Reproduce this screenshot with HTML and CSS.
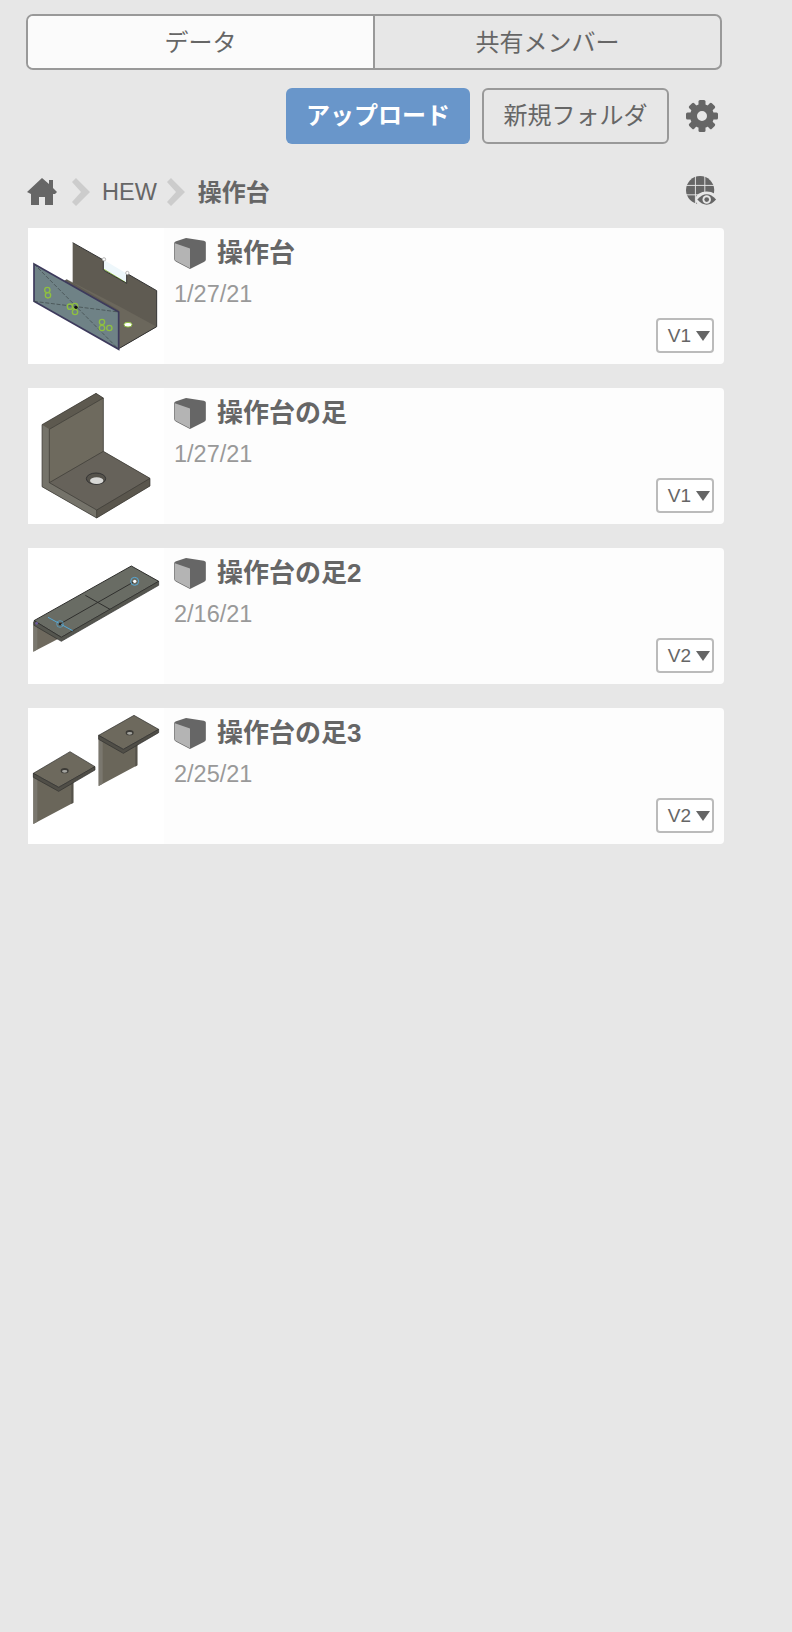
FILE: index.html
```html
<!DOCTYPE html>
<html lang="ja">
<head>
    <meta charset="UTF-8">
    <meta name="viewport" content="width=device-width, initial-scale=1.0">
    <title>データ</title>
    <link rel="stylesheet" href="styles.css">
</head>
<body>

    <svg class="defs" width="0" height="0">
        <symbol id="cube" viewBox="462 56 96 94">
            <path d="M462 72Q462 68 468 66L498 56 552 64Q558 66 558 70V122Q558 126 552 129L510 150 468 128Q462 125 462 120Z" fill="#666"/>
            <path d="M464 72 510 88V148L468 126Q464 124 464 120Z" fill="#b4b4b4"/>
        </symbol>
    </svg>

    <div class="tabs">
        <div class="tab tab-active"><span>データ</span></div>
        <div class="tab"><span>共有メンバー</span></div>
    </div>

    <div class="actions">
        <button class="btn btn-upload"><span>アップロード</span></button>
        <button class="btn btn-folder"><span>新規フォルダ</span></button>
        <svg class="gear" width="32" height="32" viewBox="-16 -16 32 32">
            <circle r="8.5" fill="none" stroke="#666" stroke-width="7"/>
            <g fill="#666">
                <rect x="-3.5" y="-16" width="7" height="6" rx="1.5"/>
                <rect x="-3.5" y="-16" width="7" height="6" rx="1.5" transform="rotate(45)"/>
                <rect x="-3.5" y="-16" width="7" height="6" rx="1.5" transform="rotate(90)"/>
                <rect x="-3.5" y="-16" width="7" height="6" rx="1.5" transform="rotate(135)"/>
                <rect x="-3.5" y="-16" width="7" height="6" rx="1.5" transform="rotate(180)"/>
                <rect x="-3.5" y="-16" width="7" height="6" rx="1.5" transform="rotate(225)"/>
                <rect x="-3.5" y="-16" width="7" height="6" rx="1.5" transform="rotate(270)"/>
                <rect x="-3.5" y="-16" width="7" height="6" rx="1.5" transform="rotate(315)"/>
            </g>
        </svg>
    </div>

    <div class="crumbs">
        <svg class="home" width="30" height="28" viewBox="0 0 30 28">
            <path d="M15 0 22 6V2H26V10L30 14 28 16H4L0 14Z" fill="#666"/>
            <path d="M4 15 15 5 26 15V27H18V19H12V27H4Z" fill="#666"/>
        </svg>
        <svg class="chev" width="19" height="28" viewBox="0 0 19 28"><path d="M0 4 4 0 18 14 4 28 0 24 9 14Z" fill="#ccc"/></svg>
        <span class="crumb">HEW</span>
        <svg class="chev" width="19" height="28" viewBox="0 0 19 28"><path d="M0 4 4 0 18 14 4 28 0 24 9 14Z" fill="#ccc"/></svg>
        <span class="crumb crumb-now">操作台</span>
        <svg class="globe" width="32" height="32" viewBox="0 0 34 34">
            <circle cx="15" cy="15" r="15" fill="#666"/>
            <path d="M0 10H30M0 20H30M10 0V30M20 0V30" stroke="#e7e7e7" stroke-width="1"/>
            <ellipse cx="22" cy="25" rx="12" ry="8.5" fill="#e7e7e7"/>
            <path d="M12 25Q22 14 32 25 22 36 12 25Z" fill="#666"/>
            <circle cx="22" cy="25" r="4.5" fill="#e7e7e7"/>
            <circle cx="22" cy="25" r="2.5" fill="#666"/>
        </svg>
    </div>

    <div class="card">
        <svg class="thumb" width="136" height="136" viewBox="24 24 408 408">
            <path d="M158 68 250 120V150L320 190V160L410 212V320L296 386 42 240 140 178 158 188Z" fill="#5f5b52"/>
            <path d="M252 120 318 160V188L252 150Z" fill="#eef7fb"/>
            <path d="M252 148 318 188" stroke="#8fc040" stroke-width="3"/>
            <path d="M140 178 296 270V386L410 320 300 260Z" fill="#6b675c"/>
            <path d="M158 68 250 120V150L320 190V160L410 212V320L298 385" fill="none" stroke="#333" stroke-width="3"/>
            <path d="M42 132 296 276V388L42 244Z" fill="#6f8286" stroke="#3d3a5c" stroke-width="5"/>
            <path d="M42 132 296 388M42 244 296 276" stroke="#3b4446" stroke-width="2" stroke-dasharray="12 5"/>
            <g fill="none" stroke="#8fc040" stroke-width="4">
                <circle cx="82" cy="210" r="8"/><circle cx="84" cy="226" r="8"/>
                <circle cx="165" cy="258" r="8"/><circle cx="165" cy="276" r="8"/><circle cx="150" cy="260" r="8"/>
                <circle cx="246" cy="306" r="8"/><circle cx="246" cy="324" r="8"/><circle cx="268" cy="324" r="8"/>
            </g>
            <ellipse cx="324" cy="314" rx="12" ry="7" fill="#fff" stroke="#8fc040" stroke-width="3"/>
            <circle cx="168" cy="262" r="5" fill="#111"/>
            <circle cx="252" cy="118" r="5" fill="#fff" stroke="#999" stroke-width="2"/>
            <circle cx="322" cy="159" r="5" fill="#fff" stroke="#999" stroke-width="2"/>
        </svg>
        <div class="info">
            <div class="title"><svg class="cube" width="32" height="31"><use href="#cube"/></svg>操作台</div>
            <div class="date">1/27/21</div>
        </div>
        <div class="ver">V1<span class="arrow"></span></div>
    </div>

    <div class="card">
        <svg class="thumb" width="136" height="136" viewBox="24 24 408 408">
            <path d="M66 134 228 40 250 54V214L390 295V318L230 414 66 320Z" fill="#6a665a"/>
            <path d="M66 134 228 40 250 54 88 148Z" fill="#5d594f"/>
            <path d="M88 148 250 54V214L88 308Z" fill="#6e6a5e"/>
            <path d="M88 308 250 214 390 295 230 390Z" fill="#66625a"/>
            <path d="M66 134 88 148V308L230 390V414L66 320Z" fill="#75736a"/>
            <path d="M230 390 390 295V318L230 414Z" fill="#5a564d"/>
            <path d="M66 134 228 40 250 54V214L390 295V318L230 414 66 320ZM88 148 250 54M88 148V308L230 390 390 295M88 308 250 214M230 390V414" fill="none" stroke="#3a3833" stroke-width="2"/>
            <ellipse cx="228" cy="296" rx="29" ry="17" fill="#55524b" stroke="#333" stroke-width="3"/>
            <ellipse cx="230" cy="302" rx="20" ry="10" fill="#d8d8d6"/>
        </svg>
        <div class="info">
            <div class="title"><svg class="cube" width="32" height="31"><use href="#cube"/></svg>操作台の足</div>
            <div class="date">1/27/21</div>
        </div>
        <div class="ver">V1<span class="arrow"></span></div>
    </div>

    <div class="card">
        <svg class="thumb" width="136" height="136" viewBox="24 24 408 408">
            <path d="M40 245V335L124 292 52 250Z" fill="#6e695e"/>
            <path d="M40 245V335L52 328V252Z" fill="#7a776e"/>
            <path d="M42 242 334 78 416 124 124 292Z" fill="#696c64" stroke="#2e2e2c" stroke-width="3"/>
            <path d="M42 242V256L124 304 416 136V124L124 292Z" fill="#55564f" stroke="#2e2e2c" stroke-width="2"/>
            <path d="M120 252 344 124M196 166 270 208" fill="none" stroke="#2f2f2d" stroke-width="3"/>
            <path d="M84 232 158 272" stroke="#55a9d8" stroke-width="3"/>
            <circle cx="120" cy="252" r="10" fill="none" stroke="#55a9d8" stroke-width="2"/>
            <circle cx="120" cy="252" r="4" fill="#222"/>
            <circle cx="344" cy="124" r="12" fill="none" stroke="#55a9d8" stroke-width="3"/>
            <circle cx="344" cy="124" r="5" fill="#fff"/>
            <circle cx="50" cy="250" r="4" fill="#6a5a9a"/>
        </svg>
        <div class="info">
            <div class="title"><svg class="cube" width="32" height="31"><use href="#cube"/></svg>操作台の足2</div>
            <div class="date">2/16/21</div>
        </div>
        <div class="ver">V2<span class="arrow"></span></div>
    </div>

    <div class="card">
        <svg class="thumb" width="136" height="136" viewBox="24 24 408 408">
            <g>
                <path d="M40 220V372L160 308V240L116 272Z" fill="#6a665a"/>
                <path d="M40 220 52 226V365L40 372Z" fill="#7a776e"/>
                <path d="M160 240V308L154 312V244Z" fill="#55524a"/>
                <path d="M40 220 150 155 225 200 116 262Z" fill="#6d695d" stroke="#2e2e2c" stroke-width="2"/>
                <path d="M40 220V232L116 274 225 210V200L116 262Z" fill="#504e47" stroke="#2e2e2c" stroke-width="2"/>
                <ellipse cx="134" cy="212" rx="12" ry="8" fill="#3c3b37"/>
                <ellipse cx="134" cy="214" rx="8" ry="4" fill="#a5a5a0"/>
            </g>
            <g>
                <path d="M236 106V258L352 196V128L310 158Z" fill="#6a665a"/>
                <path d="M236 106 248 112V251L236 258Z" fill="#7a776e"/>
                <path d="M352 130V196L346 200V134Z" fill="#55524a"/>
                <path d="M236 106 342 46 416 88 310 148Z" fill="#6d695d" stroke="#2e2e2c" stroke-width="2"/>
                <path d="M236 106V118L310 160 416 98V88L310 148Z" fill="#504e47" stroke="#2e2e2c" stroke-width="2"/>
                <ellipse cx="329" cy="98" rx="12" ry="8" fill="#3c3b37"/>
                <ellipse cx="329" cy="100" rx="8" ry="4" fill="#a5a5a0"/>
            </g>
        </svg>
        <div class="info">
            <div class="title"><svg class="cube" width="32" height="31"><use href="#cube"/></svg>操作台の足3</div>
            <div class="date">2/25/21</div>
        </div>
        <div class="ver">V2<span class="arrow"></span></div>
    </div>

</body>
</html>
```

FILE: styles.css
```css
body { margin: 0; background: #e7e7e7; color: #666; font-family: "Liberation Sans", "Noto Sans CJK JP", sans-serif; font-size: 24px; }
.defs { display: block; height: 0; }

.tabs { display: flex; width: 696px; height: 56px; margin: 14px 0 0 26px; box-sizing: border-box; border: 2px solid #999; border-radius: 7px; overflow: hidden; }
.tab { flex: 1; display: flex; align-items: center; justify-content: center; padding-bottom: 4px; }
.tab-active { background: #fbfbfb; border-right: 2px solid #999; }

.actions { display: flex; align-items: center; justify-content: flex-end; gap: 12px; width: 692px; margin: 18px 0 0 26px; }
.btn { height: 56px; box-sizing: border-box; padding-bottom: 6px; border-radius: 6px; font: inherit; }
.btn-upload { width: 184px; background: #6996ca; border: 0; color: #fff; font-weight: bold; }
.btn-folder { width: 187px; background: transparent; border: 2px solid #999; color: #666; }
.gear { margin-left: 5px; }

.crumbs { display: flex; align-items: center; width: 691px; height: 34px; margin: 31px 0 0 27px; }
.chev { margin-left: 15px; }
.crumb { margin-left: 11px; font-size: 23.5px; }
.crumb + .chev { margin-left: 10px; }
.crumb-now { margin-left: 12px; padding-bottom: 4px; font-size: 24px; font-weight: bold; }
.globe { margin-left: auto; }

.card { position: relative; display: flex; width: 696px; height: 136px; margin: 0 0 24px 28px; background: #fdfdfd; border-radius: 0 4px 4px 0; }
.crumbs + .card { margin-top: 19px; }
.thumb { display: block; flex: none; background: #fff; }
.info { padding: 6px 0 0 10px; }
.title { display: flex; align-items: center; gap: 11px; height: 32px; font-size: 26px; font-weight: bold; }
.cube { margin-top: 6px; }
.date { margin-top: 14px; color: #999; font-size: 23.5px; line-height: 28px; }
.ver { position: absolute; right: 10px; bottom: 11px; display: flex; align-items: center; justify-content: flex-end; gap: 5px; width: 58px; height: 35px; box-sizing: border-box; padding-right: 2px; background: #fff; border: 2px solid #bbb; border-radius: 4px; font-size: 19px; }
.arrow { width: 0; height: 0; border-left: 7px solid transparent; border-right: 7px solid transparent; border-top: 10px solid #666; }
```
